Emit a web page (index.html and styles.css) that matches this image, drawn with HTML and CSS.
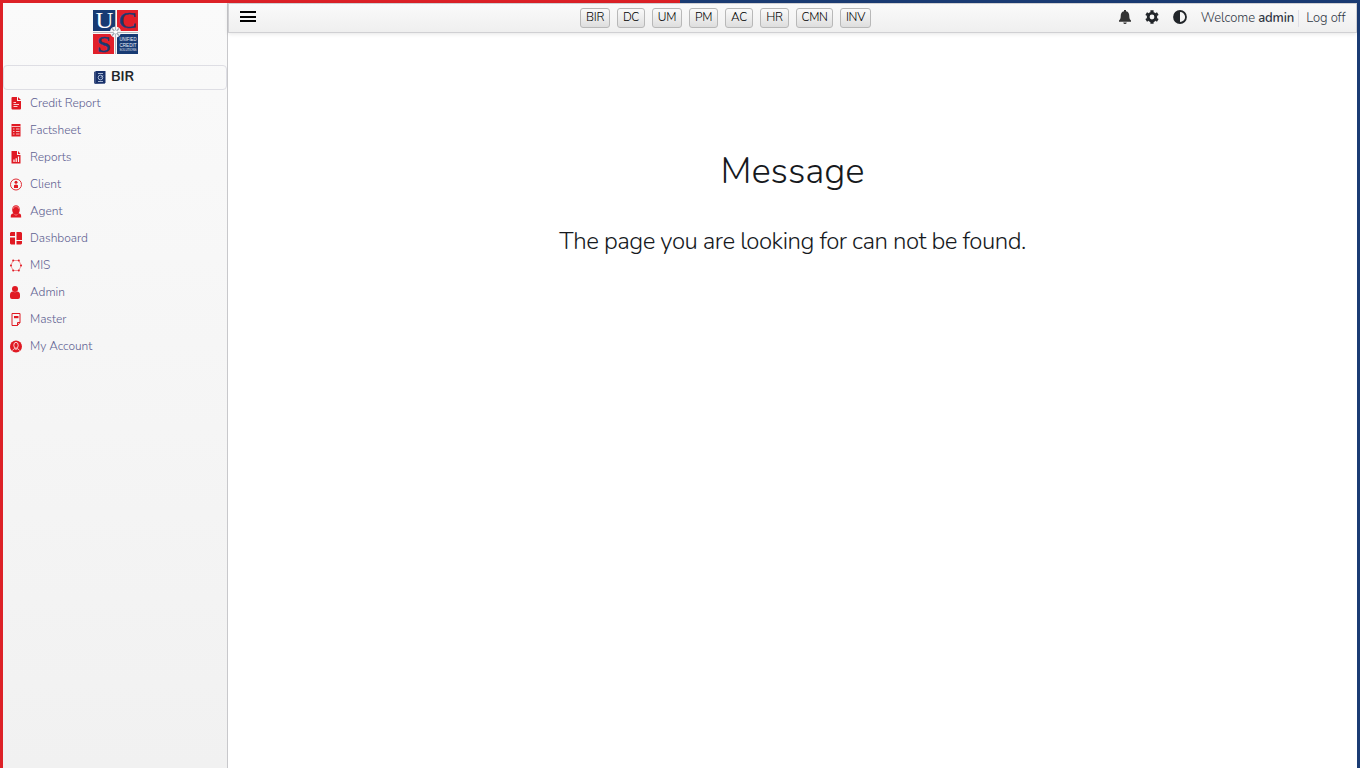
FILE: index.html
```html
<!DOCTYPE html>
<html lang="en">
<head>
<meta charset="utf-8">
<title>Message</title>
<link rel="stylesheet" href="styles.css">
</head>
<body>
<div class="topline"></div>
<div class="app">
  <aside class="sidebar">
    <div class="brand">
      <svg class="logo" width="45" height="44" viewBox="0 0 45 44">
        <path fill="#173a73" d="M0 0h22v21H0zM24 24h21v20H24z"/>
        <path fill="#e11f2a" d="M24 0h21v21H24zM0 24h21v20H0z"/>
        <circle cx="22.500" cy="22" r="5.500" fill="#f3f3f5"/>
        <path stroke="#b4b8bd" d="M22.500 0v44M0 22.500h45"/>
        <path stroke="#9aa3ae" stroke-width="1.200" d="M19 18.500l7 7M26 18.500l-7 7"/>
        <circle cx="22.500" cy="22" r="1.800" fill="#fff"/>
        <text class="serif" x="2.500" y="18.300" font-size="24" textLength="18" lengthAdjust="spacingAndGlyphs" fill="#fff">U</text>
        <text class="serif" x="26" y="18.300" font-size="24" textLength="17.500" lengthAdjust="spacingAndGlyphs" fill="#173a73" stroke="#173a73" stroke-width=".5">C</text>
        <text class="serif" x="4" y="42" font-size="24" textLength="14" lengthAdjust="spacingAndGlyphs" fill="#173a73" stroke="#173a73" stroke-width=".5">S</text>
        <g class="tiny" fill="#eef3fa"><text x="26.500" y="30.800" font-size="5.800" textLength="17" lengthAdjust="spacingAndGlyphs">UNIFIED</text>
        <text x="26.500" y="36.500" font-size="6" textLength="17" lengthAdjust="spacingAndGlyphs">CREDIT</text>
        <text x="26.500" y="41.200" font-size="4.200" textLength="17" lengthAdjust="spacingAndGlyphs">SOLUTIONS</text></g>
      </svg>
    </div>
    <div class="module">
      <svg width="12" height="13" viewBox="0 0 12 13"><path fill="#3b4f80" d="M0 1l2-1v12l9 .3V13H1l-1-1z"/><path fill="#17306a" d="M2 0h9.500v12H2z"/><circle cx="6.500" cy="6.500" r="2.300" fill="none" stroke="#b9c7df" stroke-width=".9"/><path stroke="#b9c7df" stroke-width=".9" fill="none" d="M4 2.500h5M6.500 7l2.500-2.500M4 10.500h5"/></svg>
      <span>BIR</span>
    </div>
    <nav class="menu">
      <a><i><svg viewBox="0 0 12 13"><path fill="#e01923" d="M2.500 0H7v4h4v7.500q0 1-1 1H2.500q-1 0-1-1V1q0-1 1-1zM8 0l3 3H8z"/><path stroke="#fff" stroke-width=".8" d="M3.500 5.500h2.500M3.500 7.500h5.500M3.500 9.500h4"/></svg></i><span>Credit Report</span></a>
      <a><i><svg viewBox="0 0 12 13"><path fill="#e01923" d="M1.500 0h9v12.500h-9z"/><path stroke="#fff" stroke-width=".7" d="M1.500 2.500h9M3 5h1.500M6 5h3.500M3 7.500h1.500M6 7.500h3.500M3 10h1.500M6 10h3.500"/></svg></i><span>Factsheet</span></a>
      <a><i><svg viewBox="0 0 12 13"><path fill="#e01923" d="M1.500 0H7v4h3.500v8.500h-9zM8 0l2.500 3H8z"/><path stroke="#fff" stroke-width="1.200" d="M4 8.500v2.500M6.200 7.200V11M8.500 5.500V11"/></svg></i><span>Reports</span></a>
      <a><i><svg viewBox="0 0 12 13"><circle cx="6" cy="6.500" r="5.500" fill="none" stroke="#e01923" stroke-width=".9"/><circle cx="6" cy="4.300" r="1.500" fill="#e01923"/><path fill="#e01923" d="M4 10V7.200Q6 5.800 8 7.200V10z"/></svg></i><span>Client</span></a>
      <a><i><svg viewBox="0 0 12 13"><path fill="#e01923" d="M.8 12.500v-2Q1 8.800 3.500 8.300C1.500 6.500 1.500 .3 6 .3s4.500 6.200 2.500 8c2.500.5 2.700 1.200 2.700 4.200z"/><path fill="none" stroke="#f8a0a4" stroke-width=".7" d="M3 4Q3 1.500 6 1.500T9 4M4.500 9L6 10.500 7.500 9"/></svg></i><span>Agent</span></a>
      <a><i><svg viewBox="0 0 12 13"><path fill="#e01923" d="M1 0h4v4H0V1zM6.500 0H11l1 1v7H6.500zM0 5.500h5v7H1l-1-1zM6.500 9H12v2.500l-1 1H6.500z"/></svg></i><span>Dashboard</span></a>
      <a><i><svg viewBox="0 0 12 13"><path fill="none" stroke="#ef777d" stroke-width=".8" d="M3.200 1.500h5.600L11.300 6.500l-2.500 5H3.200L.7 6.500z"/><g fill="#e01923"><circle cx="3.200" cy="1.500" r="1"/><circle cx="8.800" cy="1.500" r="1"/><circle cx="11" cy="6.500" r="1"/><circle cx="8.800" cy="11.500" r="1"/><circle cx="3.200" cy="11.500" r="1"/><circle cx="1" cy="6.500" r="1"/></g></svg></i><span>MIS</span></a>
      <a><i><svg viewBox="0 0 12 13"><circle cx="5" cy="3" r="3" fill="#e01923"/><path fill="#e01923" d="M0 11V9q0-3.500 3-3.500Q5 7 7 5.500q3 0 3 3.500v2q0 2-2 2H2q-2 0-2-2z"/></svg></i><span>Admin</span></a>
      <a><i><svg viewBox="0 0 12 13"><path fill="none" stroke="#e01923" d="M2 .5h8v9l-2.500 3H2zM10 9.500H7.500v3"/><path fill="#e01923" d="M4 3h4.500v2.200H4z"/></svg></i><span>Master</span></a>
      <a><i><svg viewBox="0 0 12 13"><circle cx="6" cy="6.500" r="6" fill="#e01923"/><ellipse cx="6" cy="5.300" rx="2.200" ry="3" fill="none" stroke="#fff" stroke-width=".8"/><path fill="none" stroke="#fff" stroke-width=".8" d="M2.500 10.500Q3.500 9 4.800 8.500L6 9.500 7.200 8.500Q8.500 9 9.500 10.500"/></svg></i><span>My Account</span></a>
    </nav>
  </aside>
  <div class="page">
    <header class="bar">
      <div class="burger"><b></b><b></b><b></b></div>
      <div class="modules">
        <button class="w30">BIR</button><button class="w28">DC</button><button class="w30">UM</button><button class="w29">PM</button><button class="w28">AC</button><button class="w29">HR</button><button class="w37">CMN</button><button class="w31">INV</button>
      </div>
      <div class="tools">
        <svg width="12" height="14" viewBox="0 0 12 14"><path fill="#333" d="M5 1.200V0h2v1.200c2.500.5 3.300 2.300 3.300 5 0 2.500.7 3.300 1.700 4.300v1.200H0v-1.200c1-1 1.700-1.800 1.700-4.300 0-2.700.8-4.500 3.300-5zM4.200 12.400h3.600Q7.500 14 6 14t-1.800-1.600z"/></svg>
        <svg width="14" height="14" viewBox="0 0 14 14"><g fill="none" stroke="#212529"><circle cx="7" cy="7" r="3.800" stroke-width="2.800"/><path stroke-width="3.200" d="M7 .3v2M7 11.700v2M1.200 3.650l1.700 1M11.100 9.350l1.700 1M1.200 10.350l1.700-1M11.100 4.650l1.700-1"/></g></svg>
        <svg width="14" height="14" viewBox="0 0 14 14"><circle cx="7" cy="7" r="6" fill="none" stroke="#212529" stroke-width="1.800"/><path fill="#212529" d="M7 1a6 6 0 0 0 0 12z"/></svg>
        <span class="welcome">Welcome <strong>admin</strong></span>
        <span class="logoff">Log off</span>
      </div>
    </header>
    <main class="content">
      <h1>Message</h1>
      <p>The page you are looking for can not be found.</p>
    </main>
  </div>
</div>
</body>
</html>
```
FILE: styles.css
```css
* { box-sizing: border-box; }
body {
  margin: 0;
  height: 768px;
  overflow: hidden;
  display: flex;
  flex-direction: column;
  font-family: Nunito, Lato, sans-serif;
  font-weight: 350;
  color: #212529;
  background: #fff;
}
.topline { height: 3px; flex: none; background: linear-gradient(90deg, #dd2127 50%, #1b3c74 50%); }
.app { flex: 1; display: flex; border-left: 3px solid #dd2127; border-right: 3px solid #1b3c74; }
.sidebar {
  width: 225px;
  flex: none;
  border-right: 1px solid #c8c8cb;
  background: linear-gradient(#fafafa, #f1f1f1);
}
.brand { height: 62px; padding-top: 7px; display: flex; justify-content: center; padding-left: 1px; }
.logo { display: block; overflow: visible; }
.serif { font-family: "Liberation Serif", serif; font-weight: 400; }
.tiny { font-family: "Liberation Sans", sans-serif; font-weight: 400; }
.module {
  height: 25px;
  border: 1px solid #dedee4;
  border-radius: 4px;
  display: flex;
  align-items: center;
  justify-content: center;
  gap: 5px;
  padding-right: 2px;
  font-size: 14px;
  font-weight: 700;
  line-height: 22px;
}
.module span { padding-bottom: 2px; }
.menu a { height: 27px; display: flex; align-items: center; padding-left: 7px; font-size: 12px; letter-spacing: -.05px; color: #5f6292; }
.menu i { width: 20px; display: flex; }
.menu svg { width: 12px; height: 13px; }
.menu span { padding-bottom: 1px; }
.page { flex: 1; min-width: 0; }
.bar {
  height: 30px;
  display: flex;
  align-items: center;
  border: 1px solid #d0d0d3;
  background: linear-gradient(#fafafa, #efefef);
  box-shadow: 0 1px 4px rgba(0, 0, 0, .1);
}
.burger { width: 16px; margin: 0 324px 3px 11px; display: flex; flex-direction: column; gap: 2.500px; }
.burger b { height: 2px; background: #000; }
.modules { display: flex; gap: 7px; }
.modules button {
  height: 20px;
  padding: 0 0 2px;
  border: 1px solid #b8b8b8;
  border-radius: 3px;
  background: linear-gradient(#fafafa, #dedede);
  font: 350 12px Nunito, Lato, sans-serif;
  letter-spacing: -.3px;
  color: #000;
}
.w28 { width: 28px; }
.w29 { width: 29px; }
.w30 { width: 30px; }
.w31 { width: 31px; }
.w37 { width: 37px; }
.tools { margin-left: auto; display: flex; align-items: center; gap: 14px; font-size: 13px; letter-spacing: -.1px; color: #303744; padding-right: 10.500px; }
.tools svg { margin-bottom: 2px; }
.welcome { margin-right: -10px; white-space: nowrap; }
.welcome strong { font-weight: 650; }
.logoff { border-left: 1px solid #dedee6; padding-left: 7px; line-height: 17px; white-space: nowrap; }
.content { text-align: center; padding-top: 115px; }
h1 { margin: 0; font-size: 36.500px; line-height: 46px; font-weight: 350; letter-spacing: -.1px; color: #16191d; }
p { margin: 33px 0 0; font-size: 24px; line-height: 28px; letter-spacing: -.5px; color: #16191d; }
```
